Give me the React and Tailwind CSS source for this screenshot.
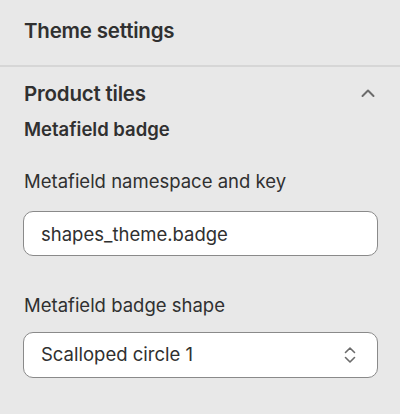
import React, { useState } from "react";

const font = { fontFamily: "Inter, 'Noto Sans', sans-serif" };

const App = () => {
  const [metaKey, setMetaKey] = useState("shapes_theme.badge");
  const [shape, setShape] = useState("Scalloped circle 1");

  return (
    <div className="w-[400px] h-[414px] bg-[#e8e8e8] text-[#303030]" style={font}>
      {/* Header */}
      <div className="h-[67px] px-6 pb-[3px] flex items-center border-b-2 border-[#d6d6d6]">
        <h1 className="text-[20.5px] leading-[24px] font-semibold tracking-[-0.2px]">Theme settings</h1>
      </div>

      <div className="px-6 pt-[15px]">
        {/* Section header */}
        <div className="flex items-center justify-between h-[24px]">
          <h2 className="text-[20.5px] leading-[24px] font-semibold tracking-[-0.2px]">Product tiles</h2>
          <svg
            width="16"
            height="16"
            viewBox="0 0 16 16"
            fill="none"
            stroke="#6b6b6b"
            strokeWidth="2"
            strokeLinecap="round"
            strokeLinejoin="round"
            className="-mt-[2px]"
          >
            <path d="M2.5 11l5.5-5.5 5.5 5.5" />
          </svg>
        </div>
        <h3 className="text-[18.5px] leading-[24px] font-semibold mt-[11px]">Metafield badge</h3>

        {/* Namespace field */}
        <label className="block text-[18.5px] leading-[24px] mt-[28px]">Metafield namespace and key</label>
        <div className="-ml-px -mr-[2px] mt-[18px]">
          <input
            type="text"
            value={metaKey}
            onChange={(e) => setMetaKey(e.target.value)}
            className="w-full h-[45px] px-[17px] rounded-[10px] border border-[#8a8a8a] bg-white text-[18.5px] text-[#303030] outline-none"
            style={font}
          />
        </div>

        {/* Shape field */}
        <label className="block text-[18.5px] leading-[24px] mt-[37px]">Metafield badge shape</label>
        <div className="relative -ml-px -mr-[2px] mt-[15px]">
          <select
            value={shape}
            onChange={(e) => setShape(e.target.value)}
            className="w-full h-[46px] pl-[17px] pr-10 rounded-[10px] border border-[#8a8a8a] bg-white text-[18.5px] text-[#303030] outline-none appearance-none"
            style={font}
          >
            <option>Scalloped circle 1</option>
            <option>Scalloped circle 2</option>
            <option>Star</option>
          </select>
          <svg
            width="14"
            height="20"
            viewBox="0 0 14 20"
            fill="none"
            stroke="#6b6b6b"
            strokeWidth="1.6"
            strokeLinecap="round"
            strokeLinejoin="round"
            className="absolute right-[21px] top-[13px] pointer-events-none"
          >
            <path d="M2.5 7.5l4.5-4.5 4.5 4.5" />
            <path d="M2.5 12.5l4.5 4.5 4.5-4.5" />
          </svg>
        </div>
      </div>
    </div>
  );
};

export default App;
